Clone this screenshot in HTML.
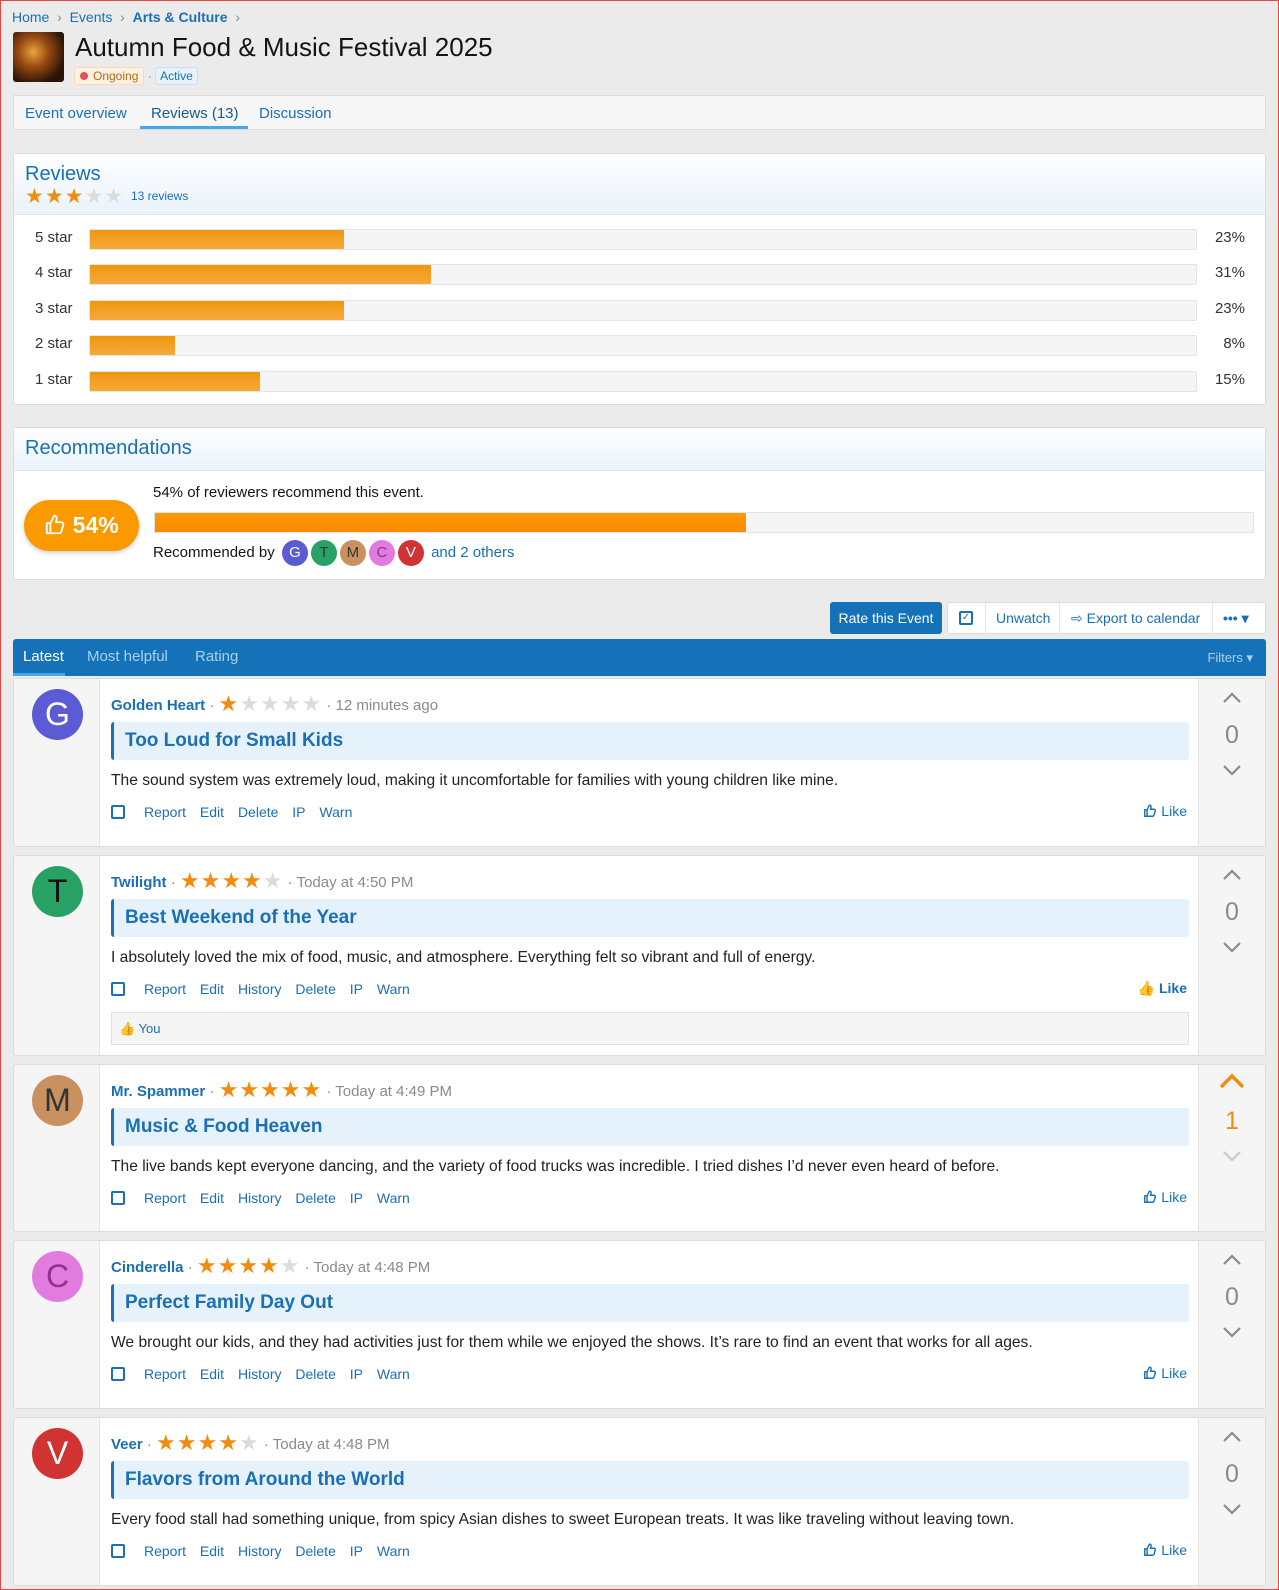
<!DOCTYPE html>
<html><head><meta charset="utf-8">
<style>
*{box-sizing:border-box;margin:0;padding:0}
body{width:1279px;height:1590px;background:#ebebeb;font-family:"Liberation Sans",sans-serif;color:#141414;position:relative;overflow:hidden;border:1px solid #e84545}
a{color:#1a6fb5;text-decoration:none}
.abs{position:absolute}
.blk{position:absolute;left:12px;width:1253px;background:#fff;border:1px solid #dcdcdc;border-radius:3px}
.bar{position:absolute;left:75px;width:1108px;height:21px;background:#f5f5f5;border:1px solid #e4e4e4;border-radius:2px}
.bar i{display:block;height:100%;background:linear-gradient(#f0960f,#f6a93a)}
.lbl{position:absolute;left:21px;font-size:15px;color:#333}
.pct{position:absolute;right:20px;font-size:15px;color:#333}
.st{color:#f28c0f}.se{color:#dcdcdc}
.rv{position:absolute;left:12px;width:1253px;background:#fff;border:1px solid #dcdcdc;border-radius:3px;overflow:hidden}
.rv .lc{position:absolute;left:0;top:0;bottom:0;width:86px;background:#f5f5f5;border-right:1px solid #e4e4e4}
.rv .vc{position:absolute;right:0;top:0;bottom:0;width:67px;background:#f5f5f5;border-left:1px solid #e4e4e4;text-align:center;color:#8a8a8a}
.av{position:absolute;left:18px;top:10px;width:51px;height:51px;border-radius:50%;color:#fff;font-size:32px;text-align:center;line-height:51px}
.hd{position:absolute;left:97px;top:12px;font-size:15px;color:#8a8a8a;white-space:nowrap}
.hd b{color:#1a6fb5}
.hd .s{font-size:22px;letter-spacing:1px;vertical-align:-1px}
.tt{position:absolute;left:97px;width:1078px;top:43px;height:38px;background:#e6f2fb;border-left:3px solid #1a6fb5;border-radius:3px;color:#1a6fb5;font-weight:bold;font-size:19px;line-height:38px;padding-left:11px}
.bd{position:absolute;left:97px;top:93px;font-size:15.6px;color:#222;white-space:nowrap}
.ac{position:absolute;left:97px;top:125px;font-size:14px;white-space:nowrap}
.ac .cb{display:inline-block;width:14px;height:14px;border:2px solid #1a6fb5;border-radius:2px;vertical-align:-2px;margin-right:19px}
.ac a{margin-right:10px}
.lk{position:absolute;right:78px;top:124px;font-size:14px;color:#1a6fb5}
.lk svg{vertical-align:-2px}
.up{position:absolute;left:0;right:0;top:12px}
.num{position:absolute;left:0;right:0;top:42px;font-size:25px}
.dn{position:absolute;left:0;right:0;top:84px}
.av2{display:inline-block;width:26px;height:26px;border-radius:50%;color:#333;font-size:15px;text-align:center;line-height:26px;vertical-align:middle;margin-left:3px}
</style></head><body>

<div class="abs" style="left:11px;top:8px;font-size:14px"><a>Home</a> <span style="color:#888">&nbsp;›&nbsp;</span> <a>Events</a> <span style="color:#888">&nbsp;›&nbsp;</span> <a style="font-weight:bold">Arts &amp; Culture</a> <span style="color:#888">&nbsp;›</span></div>
<div class="abs" style="left:12px;top:31px;width:51px;height:50px;border-radius:3px;background:radial-gradient(circle at 40% 40%,#e7a63a 0,#9a4a12 35%,#2a1408 75%)"></div>
<div class="abs" style="left:74px;top:31px;font-size:26px;color:#141414">Autumn Food &amp; Music Festival 2025</div>
<div class="abs" style="left:73px;top:66px;font-size:12px;white-space:nowrap">
<span style="display:inline-block;background:#fdf1e2;border:1px solid #f6dcb7;color:#b36a10;border-radius:3px;padding:1px 5px"><span style="display:inline-block;width:8px;height:8px;border-radius:50%;background:#e0505a;margin-right:5px"></span>Ongoing</span>
<span style="color:#888">·</span>
<span style="display:inline-block;background:#e6f2fb;border:1px solid #c7e0f5;color:#1a6fb5;border-radius:3px;padding:1px 4px">Active</span></div>

<div class="abs" style="left:12px;top:94px;width:1253px;height:35px;background:#f7f7f7;border:1px solid #dcdcdc;border-radius:2px;font-size:15px">
<a class="abs" style="left:11px;top:9px">Event overview</a>
<span class="abs" style="left:137px;top:9px;color:#1a5a8e">Reviews (13)</span>
<div class="abs" style="left:126px;top:30px;width:108px;height:3px;background:#47a7eb"></div>
<a class="abs" style="left:245px;top:9px">Discussion</a></div>

<div class="blk" style="top:152px;height:252px">
<div style="height:61px;background:linear-gradient(#fff,#e9f3fb);border-bottom:1px solid #dbe6ef"></div>
<div class="abs" style="left:11px;top:9px;font-size:20px;color:#1a6fb5">Reviews</div>
<div class="abs" style="left:11px;top:30px;font-size:21px;letter-spacing:1px"><span class="st">★★★</span><span class="se">★★</span> <span style="font-size:12px;color:#1a6fb5;letter-spacing:0;vertical-align:3px">13 reviews</span></div>
<div class="lbl" style="top:75px">5 star</div><div class="bar" style="top:75px"><i style="width:23%"></i></div><div class="pct" style="top:75px">23%</div>
<div class="lbl" style="top:110px">4 star</div><div class="bar" style="top:110px"><i style="width:30.8%"></i></div><div class="pct" style="top:110px">31%</div>
<div class="lbl" style="top:146px">3 star</div><div class="bar" style="top:146px"><i style="width:23%"></i></div><div class="pct" style="top:146px">23%</div>
<div class="lbl" style="top:181px">2 star</div><div class="bar" style="top:181px"><i style="width:7.7%"></i></div><div class="pct" style="top:181px">8%</div>
<div class="lbl" style="top:217px">1 star</div><div class="bar" style="top:217px"><i style="width:15.4%"></i></div><div class="pct" style="top:217px">15%</div>
</div>

<div class="blk" style="top:426px;height:153px">
<div style="height:43px;background:linear-gradient(#fff,#e9f3fb);border-bottom:1px solid #dbe6ef"></div>
<div class="abs" style="left:11px;top:9px;font-size:20px;color:#1a6fb5">Recommendations</div>
<div class="abs" style="left:10px;top:72px;width:115px;height:51px;border-radius:26px;background:#fb9a00;color:#fff;font-weight:bold;font-size:23px;line-height:51px;text-align:center;box-shadow:0 2px 4px rgba(0,0,0,.2)">
<svg width="22" height="22" viewBox="0 0 24 24" style="vertical-align:-3px" fill="none" stroke="#fff" stroke-width="2"><path d="M7 10v11H3V10zM7 10l4-8c2 0 3 1 3 3l-1 4h6c1.5 0 2.5 1.3 2 3l-2 7c-.4 1.2-1.2 2-2.5 2H7"/></svg> 54%</div>
<div class="abs" style="left:139px;top:56px;font-size:15px">54% of reviewers recommend this event.</div>
<div class="abs" style="left:140px;top:84px;width:1100px;height:21px;background:#f5f5f5;border:1px solid #e4e4e4"><div style="width:53.8%;height:100%;background:linear-gradient(#ff9a00,#f88a00)"></div></div>
<div class="abs" style="left:139px;top:112px;font-size:15px;white-space:nowrap">Recommended by <span class="av2" style="background:#5b5bd6;color:#fff">G</span><span class="av2" style="background:#27a264">T</span><span class="av2" style="background:#c99060">M</span><span class="av2" style="background:#e27be0;color:#92308f">C</span><span class="av2" style="background:#d13232;color:#fff">V</span> <a style="margin-left:3px">and 2 others</a></div>
</div>

<div class="abs" style="left:829px;top:601px;width:112px;height:32px;background:#1672b8;color:#fff;border-radius:3px;font-size:14px;line-height:32px;text-align:center">Rate this Event</div>
<div class="abs" style="left:946px;top:601px;width:319px;height:32px;background:#fff;border:1px solid #dcdcdc;border-radius:3px;font-size:14px;color:#1a6fb5;line-height:30px">
<span class="abs" style="left:11px;top:8px;width:14px;height:14px;border:2px solid #1a6fb5;border-radius:2px;font-size:10px;line-height:10px;text-align:center">✓</span>
<span class="abs" style="left:37px;top:0;width:1px;height:30px;background:#e4e4e4"></span>
<span class="abs" style="left:48px">Unwatch</span>
<span class="abs" style="left:111px;top:0;width:1px;height:30px;background:#e4e4e4"></span>
<span class="abs" style="left:123px">⇨ Export to calendar</span>
<span class="abs" style="left:264px;top:0;width:1px;height:30px;background:#e4e4e4"></span>
<span class="abs" style="left:275px;font-weight:bold">••• ▾</span></div>

<div class="abs" style="left:12px;top:638px;width:1253px;height:37px;background:#1672b8;border-radius:3px 3px 0 0;font-size:15px;color:#a9d0ef">
<span class="abs" style="left:10px;top:9px;color:#fff">Latest</span>
<div class="abs" style="left:0;top:34px;width:52px;height:3px;background:#47a7eb"></div>
<span class="abs" style="left:74px;top:9px">Most helpful</span>
<span class="abs" style="left:182px;top:9px">Rating</span>
<span class="abs" style="right:13px;top:11px;font-size:13px">Filters ▾</span></div>

<!-- review 1 -->
<div class="rv" style="top:677px;height:169px"><div class="lc"></div><div class="vc"><div class="up"><svg width="20" height="12" viewBox="0 0 20 12" fill="none" stroke="#8a8a8a" stroke-width="2.2"><path d="M2 10l8-8 8 8"/></svg></div><div class="num">0</div><div class="dn"><svg width="20" height="12" viewBox="0 0 20 12" fill="none" stroke="#8a8a8a" stroke-width="2.2"><path d="M2 2l8 8 8-8"/></svg></div></div>
<div class="av" style="background:#5b5bd6">G</div>
<div class="hd"><b>Golden Heart</b> · <span class="s"><span class="st">★</span><span class="se">★★★★</span></span> · 12 minutes ago</div>
<div class="tt">Too Loud for Small Kids</div>
<div class="bd">The sound system was extremely loud, making it uncomfortable for families with young children like mine.</div>
<div class="ac"><span class="cb"></span><a>Report</a> <a>Edit</a> <a>Delete</a> <a>IP</a> <a>Warn</a></div>
<div class="lk"><svg width="14" height="14" viewBox="0 0 24 24" fill="none" stroke="#1a6fb5" stroke-width="2.4"><path d="M7 10v11H3V10zM7 10l4-8c2 0 3 1 3 3l-1 4h6c1.5 0 2.5 1.3 2 3l-2 7c-.4 1.2-1.2 2-2.5 2H7"/></svg> Like</div></div>

<!-- review 2 -->
<div class="rv" style="top:854px;height:201px"><div class="lc"></div><div class="vc"><div class="up"><svg width="20" height="12" viewBox="0 0 20 12" fill="none" stroke="#8a8a8a" stroke-width="2.2"><path d="M2 10l8-8 8 8"/></svg></div><div class="num">0</div><div class="dn"><svg width="20" height="12" viewBox="0 0 20 12" fill="none" stroke="#8a8a8a" stroke-width="2.2"><path d="M2 2l8 8 8-8"/></svg></div></div>
<div class="av" style="background:#27a264;color:#111">T</div>
<div class="hd"><b>Twilight</b> · <span class="s"><span class="st">★★★★</span><span class="se">★</span></span> · Today at 4:50 PM</div>
<div class="tt">Best Weekend of the Year</div>
<div class="bd">I absolutely loved the mix of food, music, and atmosphere. Everything felt so vibrant and full of energy.</div>
<div class="ac"><span class="cb"></span><a>Report</a> <a>Edit</a> <a>History</a> <a>Delete</a> <a>IP</a> <a>Warn</a></div>
<div class="lk" style="font-weight:bold">👍 Like</div>
<div class="abs" style="left:97px;top:156px;width:1078px;height:33px;background:#f5f5f5;border:1px solid #e0e0e0;font-size:13px;line-height:31px;padding-left:7px;color:#1a6fb5">👍 You</div></div>

<!-- review 3 -->
<div class="rv" style="top:1063px;height:168px"><div class="lc"></div><div class="vc"><div class="up" style="top:8px"><svg width="28" height="16" viewBox="0 0 28 16" fill="none" stroke="#f28c0f" stroke-width="3.5"><path d="M3 14L14 3l11 11"/></svg></div><div class="num" style="color:#f28c0f">1</div><div class="dn"><svg width="20" height="12" viewBox="0 0 20 12" fill="none" stroke="#c8c8c8" stroke-width="2.2"><path d="M2 2l8 8 8-8"/></svg></div></div>
<div class="av" style="background:#c99060;color:#333">M</div>
<div class="hd"><b>Mr. Spammer</b> · <span class="s"><span class="st">★★★★★</span></span> · Today at 4:49 PM</div>
<div class="tt">Music &amp; Food Heaven</div>
<div class="bd">The live bands kept everyone dancing, and the variety of food trucks was incredible. I tried dishes I’d never even heard of before.</div>
<div class="ac"><span class="cb"></span><a>Report</a> <a>Edit</a> <a>History</a> <a>Delete</a> <a>IP</a> <a>Warn</a></div>
<div class="lk"><svg width="14" height="14" viewBox="0 0 24 24" fill="none" stroke="#1a6fb5" stroke-width="2.4"><path d="M7 10v11H3V10zM7 10l4-8c2 0 3 1 3 3l-1 4h6c1.5 0 2.5 1.3 2 3l-2 7c-.4 1.2-1.2 2-2.5 2H7"/></svg> Like</div></div>

<!-- review 4 -->
<div class="rv" style="top:1239px;height:169px"><div class="lc"></div><div class="vc"><div class="up"><svg width="20" height="12" viewBox="0 0 20 12" fill="none" stroke="#8a8a8a" stroke-width="2.2"><path d="M2 10l8-8 8 8"/></svg></div><div class="num">0</div><div class="dn"><svg width="20" height="12" viewBox="0 0 20 12" fill="none" stroke="#8a8a8a" stroke-width="2.2"><path d="M2 2l8 8 8-8"/></svg></div></div>
<div class="av" style="background:#e27be0;color:#92308f">C</div>
<div class="hd"><b>Cinderella</b> · <span class="s"><span class="st">★★★★</span><span class="se">★</span></span> · Today at 4:48 PM</div>
<div class="tt">Perfect Family Day Out</div>
<div class="bd">We brought our kids, and they had activities just for them while we enjoyed the shows. It’s rare to find an event that works for all ages.</div>
<div class="ac"><span class="cb"></span><a>Report</a> <a>Edit</a> <a>History</a> <a>Delete</a> <a>IP</a> <a>Warn</a></div>
<div class="lk"><svg width="14" height="14" viewBox="0 0 24 24" fill="none" stroke="#1a6fb5" stroke-width="2.4"><path d="M7 10v11H3V10zM7 10l4-8c2 0 3 1 3 3l-1 4h6c1.5 0 2.5 1.3 2 3l-2 7c-.4 1.2-1.2 2-2.5 2H7"/></svg> Like</div></div>

<!-- review 5 -->
<div class="rv" style="top:1416px;height:169px"><div class="lc"></div><div class="vc"><div class="up"><svg width="20" height="12" viewBox="0 0 20 12" fill="none" stroke="#8a8a8a" stroke-width="2.2"><path d="M2 10l8-8 8 8"/></svg></div><div class="num">0</div><div class="dn"><svg width="20" height="12" viewBox="0 0 20 12" fill="none" stroke="#8a8a8a" stroke-width="2.2"><path d="M2 2l8 8 8-8"/></svg></div></div>
<div class="av" style="background:#d13232">V</div>
<div class="hd"><b>Veer</b> · <span class="s"><span class="st">★★★★</span><span class="se">★</span></span> · Today at 4:48 PM</div>
<div class="tt">Flavors from Around the World</div>
<div class="bd">Every food stall had something unique, from spicy Asian dishes to sweet European treats. It was like traveling without leaving town.</div>
<div class="ac"><span class="cb"></span><a>Report</a> <a>Edit</a> <a>History</a> <a>Delete</a> <a>IP</a> <a>Warn</a></div>
<div class="lk"><svg width="14" height="14" viewBox="0 0 24 24" fill="none" stroke="#1a6fb5" stroke-width="2.4"><path d="M7 10v11H3V10zM7 10l4-8c2 0 3 1 3 3l-1 4h6c1.5 0 2.5 1.3 2 3l-2 7c-.4 1.2-1.2 2-2.5 2H7"/></svg> Like</div></div>

</body></html>
